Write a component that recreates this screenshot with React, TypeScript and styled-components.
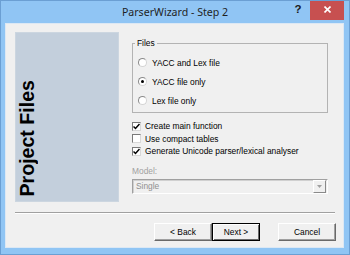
import React from 'react';
import styled, { createGlobalStyle } from 'styled-components';

const GlobalStyle = createGlobalStyle`
  html, body {
    margin: 0;
    padding: 0;
    background: #ffffff;
  }
  * {
    box-sizing: border-box;
  }
`;

const Window = styled.div`
  width: 350px;
  height: 255px;
  background: #90c5f4;
  border: 1px solid #6b9fd3;
  display: flex;
  flex-direction: column;
  font-family: "Liberation Sans", Arial, sans-serif;
  font-size: 8.4px;
  color: #000;
`;

const TitleBar = styled.div`
  height: 22px;
  display: grid;
  grid-template-columns: 1fr auto 1fr;
  align-items: start;
`;

const Title = styled.div`
  grid-column: 2;
  font-family: "Noto Sans", "Open Sans", sans-serif;
  font-size: 10.6px;
  line-height: 23px;
  color: #1f1f1f;
`;

const Controls = styled.div`
  grid-column: 3;
  justify-self: end;
  display: flex;
  align-items: flex-start;
  margin-right: 5px;
`;

const HelpButton = styled.div`
  width: 24px;
  height: 19px;
  display: flex;
  justify-content: center;
  padding-top: 2px;
  font-family: "Liberation Sans", Arial, sans-serif;
  font-weight: 700;
  font-size: 11.5px;
  line-height: 12px;
  color: #1a1a1a;
`;

const CloseButton = styled.div`
  width: 34px;
  height: 19px;
  background: #c75050;
  display: flex;
  justify-content: center;
  padding-top: 5px;
`;

const Client = styled.div`
  margin: 0 5px 0 4px;
  height: 225px;
  background: #f0f0f0;
  border: 1px solid #dce8f4;
  display: flex;
  flex-direction: column;
  padding: 8px 0 0 9px;
`;

const Main = styled.div`
  display: flex;
  gap: 13px;
  height: 170px;
`;

const SidePanel = styled.div`
  width: 104px;
  height: 170px;
  background: #c3cfdc;
  border: 1px solid #ccd6e0;
  display: flex;
  align-items: flex-end;
  padding-bottom: 4px;
`;

const SideTitle = styled.div`
  writing-mode: vertical-rl;
  transform: rotate(180deg);
  font-family: "Liberation Sans", Arial, sans-serif;
  font-weight: 700;
  font-size: 19.6px;
  line-height: 20px;
  color: #000;
  white-space: nowrap;
  margin-left: 1px;
`;

const Content = styled.div`
  width: 196px;
  display: flex;
  flex-direction: column;
`;

const GroupBox = styled.div`
  position: relative;
  margin-top: 11px;
  height: 70px;
  border: 1px solid #b3b3b3;
  padding: 9px 0 0 5px;
  display: flex;
  flex-direction: column;
`;

const GroupLabel = styled.span`
  position: absolute;
  top: -6px;
  left: 2px;
  padding: 0 2px;
  background: #f0f0f0;
  line-height: 10px;
`;

const OptionRow = styled.div<{ $height: number }>`
  height: ${({ $height }) => $height}px;
  display: flex;
  align-items: center;
  gap: 5px;
  white-space: nowrap;
`;

const Radio = styled.span<{ $checked?: boolean }>`
  width: 9px;
  height: 9px;
  border-radius: 50%;
  background: #fff;
  border: 1px solid #8a8a8a;
  border-right-color: #d4d4d4;
  border-bottom-color: #d4d4d4;
  display: flex;
  align-items: center;
  justify-content: center;

  &::after {
    content: '';
    width: 3px;
    height: 3px;
    border-radius: 50%;
    background: ${({ $checked }) => ($checked ? '#000' : 'transparent')};
  }
`;

const CheckList = styled.div`
  margin-top: 7px;
  display: flex;
  flex-direction: column;
`;

const Checkbox = styled.span`
  width: 9px;
  height: 9px;
  background: #fff;
  border: 1px solid #7a7a7a;
  border-right-color: #d8d8d8;
  border-bottom-color: #d8d8d8;
  display: flex;
  align-items: center;
  justify-content: center;
  margin-right: -1px;
`;

const FieldLabel = styled.div`
  margin-top: 8px;
  line-height: 10px;
  color: #a0a0a0;
`;

const Select = styled.div`
  margin-top: 3px;
  height: 15px;
  display: flex;
  background: #f0f0f0;
  border: 1px solid #a0a0a0;
  border-right-color: #fff;
  border-bottom-color: #fff;
  box-shadow: inset 1px 1px #d0d0d0;
`;

const SelectValue = styled.div`
  flex: 1;
  padding-left: 3px;
  line-height: 13px;
  color: #8f8f8f;
`;

const SelectArrow = styled.div`
  width: 13px;
  margin: 0 1px 0 0;
  border: 1px solid #fff;
  border-right-color: #8a8a8a;
  border-bottom-color: #8a8a8a;
  display: flex;
  align-items: center;
  justify-content: center;
`;

const Separator = styled.div`
  margin: 10px 8px 0 0;
  height: 2px;
  border-top: 1px solid #a0a0a0;
  border-bottom: 1px solid #ffffff;
`;

const ButtonRow = styled.div`
  margin: 9px 7px 0 0;
  display: flex;
  justify-content: flex-end;
`;

const Button = styled.div<{ $default?: boolean; $gap?: number }>`
  width: ${({ $default }) => ($default ? 48 : 58)}px;
  height: 18px;
  margin-left: ${({ $gap }) => $gap ?? 0}px;
  display: flex;
  align-items: center;
  justify-content: center;
  background: #f0f0f0;
  border: 1px solid;
  border-color: ${({ $default }) => ($default ? '#000' : '#fff #696969 #696969 #fff')};
  box-shadow: ${({ $default }) =>
    $default ? 'inset 1px 1px #fff, inset -1px -1px #696969' : 'inset -1px -1px #a0a0a0'};
  white-space: nowrap;
`;

const CheckMark = () => (
  <svg width="7" height="7" viewBox="0 0 7 7">
    <path d="M0.5 3.5 L2.5 5.5 L6.5 1" stroke="#000" strokeWidth="1.5" fill="none" />
  </svg>
);

const App = () => {
  return (
    <>
      <GlobalStyle />
      <Window>
        <TitleBar>
          <Title>ParserWizard - Step 2</Title>
          <Controls>
            <HelpButton>?</HelpButton>
            <CloseButton>
              <svg width="7" height="7" viewBox="0 0 7 7">
                <path d="M0.5 0.5 L6.5 6.5 M6.5 0.5 L0.5 6.5" stroke="#fff" strokeWidth="1.6" />
              </svg>
            </CloseButton>
          </Controls>
        </TitleBar>

        <Client>
          <Main>
            <SidePanel>
              <SideTitle>Project Files</SideTitle>
            </SidePanel>

            <Content>
              <GroupBox>
                <GroupLabel>Files</GroupLabel>
                <OptionRow $height={19}>
                  <Radio />
                  YACC and Lex file
                </OptionRow>
                <OptionRow $height={19}>
                  <Radio $checked />
                  YACC file only
                </OptionRow>
                <OptionRow $height={19}>
                  <Radio />
                  Lex file only
                </OptionRow>
              </GroupBox>

              <CheckList>
                <OptionRow $height={12.5}>
                  <Checkbox>
                    <CheckMark />
                  </Checkbox>
                  Create main function
                </OptionRow>
                <OptionRow $height={12.5}>
                  <Checkbox />
                  Use compact tables
                </OptionRow>
                <OptionRow $height={12.5}>
                  <Checkbox>
                    <CheckMark />
                  </Checkbox>
                  Generate Unicode parser/lexical analyser
                </OptionRow>
              </CheckList>

              <FieldLabel>Model:</FieldLabel>
              <Select>
                <SelectValue>Single</SelectValue>
                <SelectArrow>
                  <svg width="5" height="3" viewBox="0 0 5 3">
                    <path d="M0 0 L5 0 L2.5 3 Z" fill="#a0a0a0" />
                  </svg>
                </SelectArrow>
              </Select>
            </Content>
          </Main>

          <Separator />

          <ButtonRow>
            <Button>&lt; Back</Button>
            <Button $default>Next &gt;</Button>
            <Button $gap={18}>Cancel</Button>
          </ButtonRow>
        </Client>
      </Window>
    </>
  );
};

export default App;
